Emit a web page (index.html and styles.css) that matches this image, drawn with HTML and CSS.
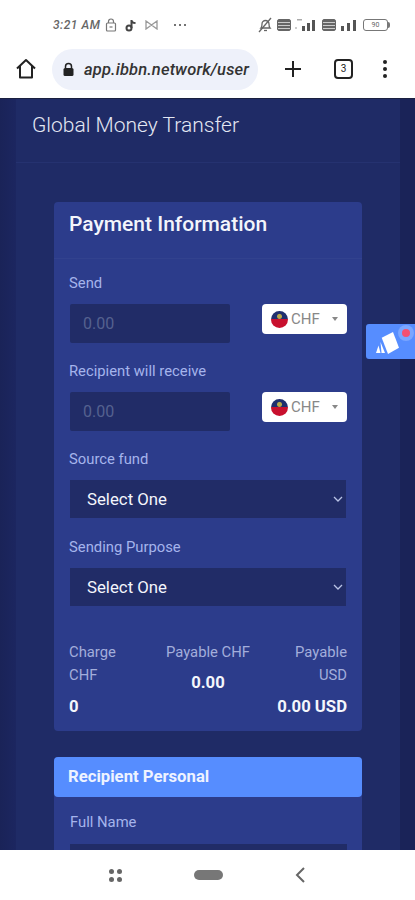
FILE: index.html
```html
<!DOCTYPE html>
<html lang="en">
<head>
    <meta charset="UTF-8">
    <meta name="viewport" content="width=device-width, initial-scale=1.0">
    <title>Global Money Transfer</title>
    <link rel="stylesheet" href="styles.css">
</head>
<body>
    <div class="phone">
        <!-- android status bar -->
        <div class="status-bar">
            <div class="status-left">
                <span class="clock">3:21 AM</span>
                <svg width="12" height="14" viewBox="0 0 12 14" fill="none" stroke="#777" stroke-width="1.2"><rect x="1.5" y="5" width="9" height="8" rx="1"/><path d="M3.5 5V3.500a2.500 2.500 0 0 1 5 0V5"/><path d="M4.500 9h3"/></svg>
                <svg class="gap-icon" width="12" height="14" viewBox="0 0 12 14" fill="none" stroke="#444" stroke-width="2"><circle cx="4" cy="10" r="2.500"/><path d="M6.500 10V2c0 2 2 3 4 3"/></svg>
                <svg class="gap-icon" width="13" height="10" viewBox="0 0 13 10" fill="none" stroke="#999" stroke-width="1.300"><path d="M1 1l5.500 4L1 9zM12 1L6.500 5 12 9z"/></svg>
                <span class="status-dots"><i></i><i></i><i></i></span>
            </div>
            <div class="status-right">
                <svg width="15" height="16" viewBox="0 0 15 16" fill="none" stroke="#666" stroke-width="1.300"><path d="M3 11c1-1 1-2 1-4a3.500 3.500 0 0 1 7 0c0 2 0 3 1 4z"/><path d="M1 15L13 1"/><path d="M6 13.500h3"/></svg>
                <span class="sim-box"></span>
                <svg width="23" height="14" viewBox="0 0 23 14" fill="#555"><rect x="2" y="1" width="5" height="1.500" fill="#aaa"/><rect x="0" y="9" width="2" height="2" fill="#ccc"/><rect x="7" y="8" width="3" height="5"/><rect x="12" y="5" width="3" height="8"/><rect x="17" y="2" width="3" height="11"/></svg>
                <span class="sim-box"></span>
                <svg width="17" height="14" viewBox="0 0 17 14" fill="#555"><rect x="1" y="8" width="3" height="5"/><rect x="7" y="5" width="3" height="8"/><rect x="13" y="2" width="3" height="11"/></svg>
                <div class="battery"><span>90</span></div>
            </div>
        </div>

        <!-- browser toolbar -->
        <div class="toolbar">
            <svg class="home-icon" width="22" height="22" viewBox="0 0 22 22" fill="none" stroke="#222" stroke-width="2" stroke-linejoin="round"><path d="M2 10.500L11 2l9 8.500M5 8v11.500h12V8"/></svg>
            <div class="url-pill">
                <svg width="13" height="15" viewBox="0 0 13 15"><path d="M3.500 6V4.500a3 3 0 0 1 6 0V6" fill="none" stroke="#222" stroke-width="1.500"/><rect x="1.500" y="6" width="10" height="8" rx="1.500" fill="#222"/></svg>
                <span class="url-text">app.ibbn.network/user</span>
            </div>
            <svg class="plus-icon" width="18" height="18" viewBox="0 0 18 18" stroke="#222" stroke-width="2"><path d="M9 1v16M1 9h16"/></svg>
            <div class="tab-count">3</div>
            <div class="menu-dots"><i></i><i></i><i></i></div>
        </div>

        <!-- web page -->
        <div class="page">
            <div class="content">
                <div class="page-title">Global Money Transfer</div>
                <div class="card">
                    <h2 class="card-head">Payment Information</h2>
                    <div class="card-body">
                        <label>Send</label>
                        <div class="amount-row">
                            <div class="amount">0.00</div>
                            <div class="currency"><span class="flag"></span>CHF<span class="caret"></span></div>
                        </div>
                        <label>Recipient will receive</label>
                        <div class="amount-row">
                            <div class="amount">0.00</div>
                            <div class="currency"><span class="flag"></span>CHF<span class="caret"></span></div>
                        </div>
                        <label>Source fund</label>
                        <div class="select">Select One
                            <svg width="10" height="6" viewBox="0 0 10 6" fill="none" stroke="#b9c3e6" stroke-width="1.300"><path d="M1 1l4 4 4-4"/></svg>
                        </div>
                        <label>Sending Purpose</label>
                        <div class="select">Select One
                            <svg width="10" height="6" viewBox="0 0 10 6" fill="none" stroke="#b9c3e6" stroke-width="1.300"><path d="M1 1l4 4 4-4"/></svg>
                        </div>
                        <div class="totals">
                            <div class="total">
                                <div class="total-label">Charge<br>CHF</div>
                                <div class="total-value">0</div>
                            </div>
                            <div class="total middle">
                                <div class="total-label">Payable CHF</div>
                                <div class="total-value">0.00</div>
                            </div>
                            <div class="total right">
                                <div class="total-label">Payable<br>USD</div>
                                <div class="total-value">0.00 USD</div>
                            </div>
                        </div>
                    </div>
                </div>
                <div class="card second">
                    <h3 class="blue-head">Recipient Personal</h3>
                    <div class="card-body short">
                        <label>Full Name</label>
                        <div class="name-input"></div>
                    </div>
                </div>
            </div>
            <div class="float-tab">
                <svg width="26" height="24" viewBox="0 0 26 24" fill="#fff"><path d="M6.700 7.700L18 2l6 15.700L13 24z"/><path d="M5.500 12L10 23H6.500z"/><path d="M3.500 15.500L5.500 23H1z"/></svg>
                <span class="float-dot"></span>
            </div>
        </div>

        <!-- android nav bar -->
        <div class="nav-bar">
            <div class="nav-grid"><i></i><i></i><i></i><i></i></div>
            <div class="nav-home"></div>
            <svg width="12" height="16" viewBox="0 0 12 16" fill="none" stroke="#666" stroke-width="2"><path d="M10 1L3 8l7 7"/></svg>
        </div>
    </div>
</body>
</html>
```

FILE: styles.css
```css
* {
    box-sizing: border-box;
}

body {
    margin: 0;
    background-color: #fff;
    font-family: Roboto, "Liberation Sans", sans-serif;
}

.phone {
    display: flex;
    flex-direction: column;
    height: 900px;
    overflow: hidden;
}

/* status bar */
.status-bar {
    display: flex;
    justify-content: space-between;
    align-items: center;
    height: 48px;
    padding: 1px 27px 0 53px;
    flex-shrink: 0;
}

.status-left,
.status-right {
    display: flex;
    align-items: center;
}

.status-left {
    gap: 5px;
}

.status-left .gap-icon {
    margin-left: 3px;
}

.status-right {
    gap: 4px;
}

.clock {
    font-size: 12px;
    font-style: italic;
    font-weight: 500;
    color: #666;
    letter-spacing: 0.5px;
}

.status-dots {
    display: flex;
    gap: 3px;
    margin-left: 11px;
}

.status-dots i {
    width: 2px;
    height: 2px;
    border-radius: 50%;
    background-color: #444;
}

.sim-box {
    width: 14px;
    height: 12px;
    border: 1px solid #666;
    border-radius: 2px;
    background: repeating-linear-gradient(#666 0 2px, #ccc 2px 3px);
}

.battery {
    position: relative;
    width: 25px;
    height: 12px;
    margin-left: 2px;
    border: 1px solid #777;
    border-radius: 3px;
    font-size: 7px;
    line-height: 10px;
    text-align: center;
    color: #666;
}

/* battery nub */
.battery::after {
    content: "";
    position: absolute;
    top: 2px;
    right: -3px;
    width: 2px;
    height: 6px;
    border-radius: 0 2px 2px 0;
    background-color: #777;
}

/* browser toolbar */
.toolbar {
    display: flex;
    align-items: center;
    height: 50px;
    padding: 0 0 8px 15px;
    flex-shrink: 0;
}

.url-pill {
    display: flex;
    align-items: center;
    gap: 9px;
    width: 206px;
    height: 41px;
    margin-left: 15px;
    padding-left: 10px;
    border-radius: 21px;
    background-color: #eef1fa;
    overflow: hidden;
}

.url-text {
    font-size: 16.500px;
    font-style: italic;
    font-weight: 500;
    letter-spacing: 0.15px;
    color: #333;
    white-space: nowrap;
}

.plus-icon {
    margin-left: 26px;
}

.tab-count {
    width: 19px;
    height: 20px;
    margin-left: 32px;
    border: 2px solid #222;
    border-radius: 4px;
    font-size: 10px;
    line-height: 16px;
    text-align: center;
    color: #222;
}

.menu-dots {
    display: flex;
    flex-direction: column;
    gap: 3px;
    margin-left: 30px;
}

.menu-dots i {
    width: 4px;
    height: 4px;
    border-radius: 50%;
    background-color: #222;
}

/* web page */
.page {
    position: relative;
    flex: 1;
    min-height: 0;
    padding: 0 15px 0 16px;
    overflow: hidden;
    background: linear-gradient(90deg, #1a2358, #1c2660 16px, #1a2358 400px);
    border-top: 1px solid #1a2040;
}

.content {
    height: 100%;
    background-color: #1f2b66;
}

.page-title {
    height: 64px;
    padding: 14px 0 0 16px;
    border-bottom: 1px solid #253270;
    font-size: 21px;
    font-weight: 300;
    color: #e3e7f3;
}

.card {
    width: 308px;
    margin: 39px 0 0 38px;
    border-radius: 4px;
    background-color: #2c3c8b;
}

.card-head {
    height: 57px;
    margin: 0;
    padding: 8px 15px 0;
    border-bottom: 1px solid #32428e;
    font-size: 21px;
    font-weight: 500;
    line-height: 28px;
    color: #f3f5fb;
}

.card-body {
    padding: 15px 15px 15px 16px;
}

label {
    display: block;
    height: 30px;
    margin-left: -1px;
    font-size: 14.800px;
    line-height: 18px;
    color: #a5b4ec;
}

.amount-row {
    display: flex;
    justify-content: space-between;
    align-items: flex-start;
    height: 58px;
}

.amount {
    width: 160px;
    height: 39px;
    padding-left: 13px;
    border-radius: 2px;
    background-color: #212c67;
    font-size: 16px;
    line-height: 39px;
    color: #55618f;
}

.currency {
    display: flex;
    align-items: center;
    width: 85px;
    height: 30px;
    padding-left: 9px;
    border-radius: 4px;
    background-color: #fff;
    font-size: 15px;
    color: #888;
}

.flag {
    width: 17px;
    height: 17px;
    margin-right: 3px;
    border-radius: 50%;
    background: radial-gradient(circle at 50% 32%, #b8a94a 0 2px, transparent 3px), linear-gradient(#1f2f6e 50%, #c8102e 50%);
}

.caret {
    margin-left: 12px;
    border-top: 4px solid #888;
    border-left: 3.500px solid transparent;
    border-right: 3.500px solid transparent;
}

.select {
    display: flex;
    justify-content: space-between;
    align-items: center;
    width: 276px;
    height: 38px;
    margin-bottom: 20px;
    padding: 0 3px 0 17px;
    background-color: #212c67;
    font-size: 16.800px;
    color: #f4f6fc;
}

.totals {
    display: grid;
    grid-template-columns: repeat(3, 1fr);
    margin-left: -1px;
    padding-top: 15px;
}

.total {
    font-size: 14.800px;
}

.total-label {
    line-height: 23px;
    color: #a3aedb;
}

.total-value {
    margin-top: 10px;
    font-size: 16.700px;
    font-weight: 700;
    line-height: 19px;
    color: #f4f6fc;
    white-space: nowrap;
}

.total.middle {
    text-align: center;
}

.total.middle .total-value {
    margin-top: 9px;
}

.total.right {
    text-align: right;
}

.card.second {
    margin-top: 26px;
}

.blue-head {
    height: 40px;
    margin: 0;
    padding-left: 14px;
    border-radius: 4px;
    background-color: #568dff;
    font-size: 16.700px;
    font-weight: 700;
    line-height: 40px;
    color: #eef3ff;
}

.card-body.short {
    padding-top: 16px;
}

.card-body.short label {
    height: 31px;
    margin-left: 0;
}

.name-input {
    height: 39px;
    background-color: #212c67;
}

.float-tab {
    position: absolute;
    top: 225px;
    right: 0;
    display: flex;
    align-items: center;
    width: 49px;
    height: 35px;
    padding-left: 9px;
    border-radius: 3px 0 0 3px;
    background-color: #568dff;
}

.float-dot {
    position: absolute;
    top: 5px;
    right: 5px;
    width: 8px;
    height: 8px;
    border-radius: 50%;
    background-color: #f5506f;
    box-shadow: 0 0 0 4px rgba(255, 255, 255, 0.22);
}

/* android nav bar */
.nav-bar {
    display: flex;
    align-items: center;
    height: 50px;
    padding: 0 0 0 109px;
    flex-shrink: 0;
    background-color: #fff;
}

.nav-grid {
    display: grid;
    grid-template-columns: 5px 5px;
    gap: 3px;
}

.nav-grid i {
    width: 5px;
    height: 5px;
    border-radius: 50%;
    background-color: #666;
}

.nav-home {
    width: 29px;
    height: 10px;
    margin: 0 71px 0 72px;
    border-radius: 5px;
    background-color: #777;
}
```
